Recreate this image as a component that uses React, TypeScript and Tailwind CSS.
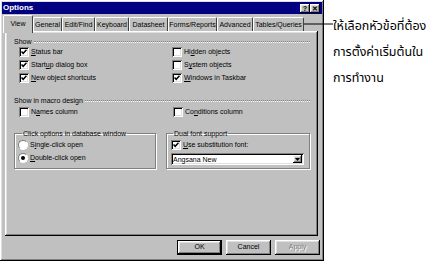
import type { ReactNode } from 'react'

const bevelOut = 'shadow-[inset_-1px_-1px_#000,inset_1px_1px_#fff,inset_-2px_-2px_#808080,inset_2px_2px_#dfdfdf]'
const bevelIn = 'shadow-[inset_1px_1px_#808080,inset_-1px_-1px_#fff,inset_2px_2px_#000,inset_-2px_-2px_#dfdfdf]'

function Check({ on, label }: { on?: boolean; label: ReactNode }) {
  return (
    <div className="flex h-[10px] items-center gap-[2px]">
      <span className={`flex h-[10px] w-[10px] shrink-0 items-center justify-center bg-white ${bevelIn}`}>
        {on && (
          <svg width="6" height="6" viewBox="0 0 6 6">
            <path d="M0.5 2.5 L2.2 4.3 L5.5 0.8" fill="none" stroke="#000" strokeWidth="1.5" />
          </svg>
        )}
      </span>
      <span className="leading-[10px]">{label}</span>
    </div>
  )
}

function Radio({ on, label }: { on?: boolean; label: ReactNode }) {
  return (
    <div className="flex h-[10px] items-center gap-[2px]">
      <span className="flex h-[10px] w-[10px] shrink-0 items-center justify-center rounded-full border border-t-[#808080] border-l-[#808080] border-r-white border-b-white bg-white">
        {on && <span className="h-[4px] w-[4px] rounded-full bg-black" />}
      </span>
      <span className="leading-[10px]">{label}</span>
    </div>
  )
}

function Etched({ label }: { label: string }) {
  return (
    <div className="flex h-[9px] items-center gap-[2px]">
      <span className="leading-[9px]">{label}</span>
      <span className="h-[2px] flex-1 border-t border-b border-dotted border-t-[#808080] border-b-white" />
    </div>
  )
}

function U({ children }: { children: string }) {
  return <span className="underline underline-offset-1">{children}</span>
}

const tabs = [
  { name: 'View', w: 'w-[30px]', on: true },
  { name: 'General', w: 'w-[29px]' },
  { name: 'Edit/Find', w: 'w-[33px]' },
  { name: 'Keyboard', w: 'w-[34px]' },
  { name: 'Datasheet', w: 'w-[39px]' },
  { name: 'Forms/Reports', w: 'w-[49px]' },
  { name: 'Advanced', w: 'w-[36px]' },
  { name: 'Tables/Queries', w: 'w-[51px]' },
]

export default function App() {
  return (
    <div className="relative flex h-[264px] w-[436px] bg-white text-black">
      {/* dialog */}
      <div className={`flex h-[261px] w-[324px] shrink-0 flex-col bg-[#c0c0c0] p-[2px] font-['Liberation_Sans',Arial,sans-serif] text-[7px] ${bevelOut}`}>
        <div className="flex h-[12px] items-center bg-[#000080] pl-[1px] pr-[2px]">
          <span className="text-[8px] font-bold leading-[12px] text-white">Options</span>
          <div className="ml-auto flex">
            <span className={`flex h-[9px] w-[10px] items-center justify-center bg-[#c0c0c0] text-[7px] font-bold leading-none ${bevelOut}`}>?</span>
            <span className={`flex h-[9px] w-[10px] items-center justify-center bg-[#c0c0c0] text-[7px] font-bold leading-none ${bevelOut}`}>✕</span>
          </div>
        </div>

        {/* tabs */}
        <div className="relative z-10 ml-[1px] mt-[1px] flex h-[16px] items-end">
          {tabs.map((t) => (
            <div
              key={t.name}
              className={`flex ${t.w} items-center justify-center rounded-t-[2px] border-l border-r border-t border-l-white border-t-white border-r-[#404040] bg-[#c0c0c0] ${t.on ? '-mb-[2px] h-[18px] pb-[2px]' : 'h-[14px]'}`}
            >
              <span className="leading-[9px]">{t.name}</span>
            </div>
          ))}
        </div>

        {/* panel */}
        <div className={`ml-[3px] flex h-[205px] w-[313px] flex-col pl-[9px] pr-[8px] pt-[6px] ${bevelOut}`}>
          <Etched label="Show" />
          <div className="ml-[5px] mt-[1px] grid grid-cols-[153px_1fr] gap-y-[3px]">
            <Check on label={<><U>S</U>tatus bar</>} />
            <Check label={<>Hi<U>d</U>den objects</>} />
            <Check on label={<>Start<U>u</U>p dialog box</>} />
            <Check label={<>S<U>y</U>stem objects</>} />
            <Check on label={<><U>N</U>ew object shortcuts</>} />
            <Check on label={<><U>W</U>indows in Taskbar</>} />
          </div>

          <div className="mt-[13px]">
            <Etched label="Show in macro design" />
          </div>
          <div className="ml-[5px] mt-[2px] grid grid-cols-[154px_1fr]">
            <Check label={<>N<U>a</U>mes column</>} />
            <Check label={<>Co<U>n</U>ditions column</>} />
          </div>

          <div className="mt-[12px] flex gap-[10px]">
            <fieldset className="w-[144px] border border-[#808080] pb-[4px] pl-[3px] shadow-[1px_1px_#fff,inset_1px_1px_#fff]">
              <legend className="ml-[4px] px-[1px] leading-[9px]">Click options in database window</legend>
              <div className="mt-[2px] flex flex-col gap-[3px]">
                <Radio label={<>S<U>i</U>ngle-click open</>} />
                <Radio on label={<><U>D</U>ouble-click open</>} />
              </div>
            </fieldset>
            <fieldset className="w-[146px] border border-[#808080] pb-[3px] pl-[4px] pr-[5px] shadow-[1px_1px_#fff,inset_1px_1px_#fff]">
              <legend className="ml-[2px] px-[1px] leading-[9px]">Dual font support</legend>
              <div className="mt-[2px]">
                <Check on label={<><U>U</U>se substitution font:</>} />
              </div>
              <div className={`mt-[3px] flex h-[12px] items-center bg-white pl-[2px] pr-[2px] ${bevelIn}`}>
                <span className="leading-[9px]">Angsana New</span>
                <span className={`ml-auto flex h-[8px] w-[9px] items-center justify-center bg-[#c0c0c0] ${bevelOut}`}>
                  <svg width="5" height="3" viewBox="0 0 5 3">
                    <path d="M0 0 H5 L2.5 3 Z" fill="#000" />
                  </svg>
                </span>
              </div>
            </fieldset>
          </div>
        </div>

        {/* buttons */}
        <div className="mt-[4px] flex justify-end gap-[4px] pr-[2px]">
          <div className="flex h-[15px] w-[45px] items-center justify-center border border-black">
            <div className={`flex h-full w-full items-center justify-center ${bevelOut}`}>OK</div>
          </div>
          <div className={`flex h-[15px] w-[45px] items-center justify-center ${bevelOut}`}>Cancel</div>
          <div className={`flex h-[15px] w-[45px] items-center justify-center text-[#808080] [text-shadow:1px_1px_#fff] ${bevelOut}`}>Apply</div>
        </div>
      </div>

      {/* annotation */}
      <div className="ml-[9px] whitespace-nowrap pt-[14px] font-['Tahoma','Noto_Sans_Thai','Garuda','Loma','DejaVu_Sans',sans-serif] text-[12.5px] leading-[26px]">
        <p>ให้เลือกหัวข้อที่ต้อง</p>
        <p>การตั้งค่าเริ่มต้นใน</p>
        <p>การทำงาน</p>
      </div>

      <svg className="absolute left-[274px] top-[20px]" width="60" height="8" viewBox="0 0 60 8">
        <path d="M5 4 H59" stroke="#000" strokeWidth="1" />
        <path d="M1 4 L9 1 L9 7 Z" fill="#000" />
      </svg>
    </div>
  )
}
